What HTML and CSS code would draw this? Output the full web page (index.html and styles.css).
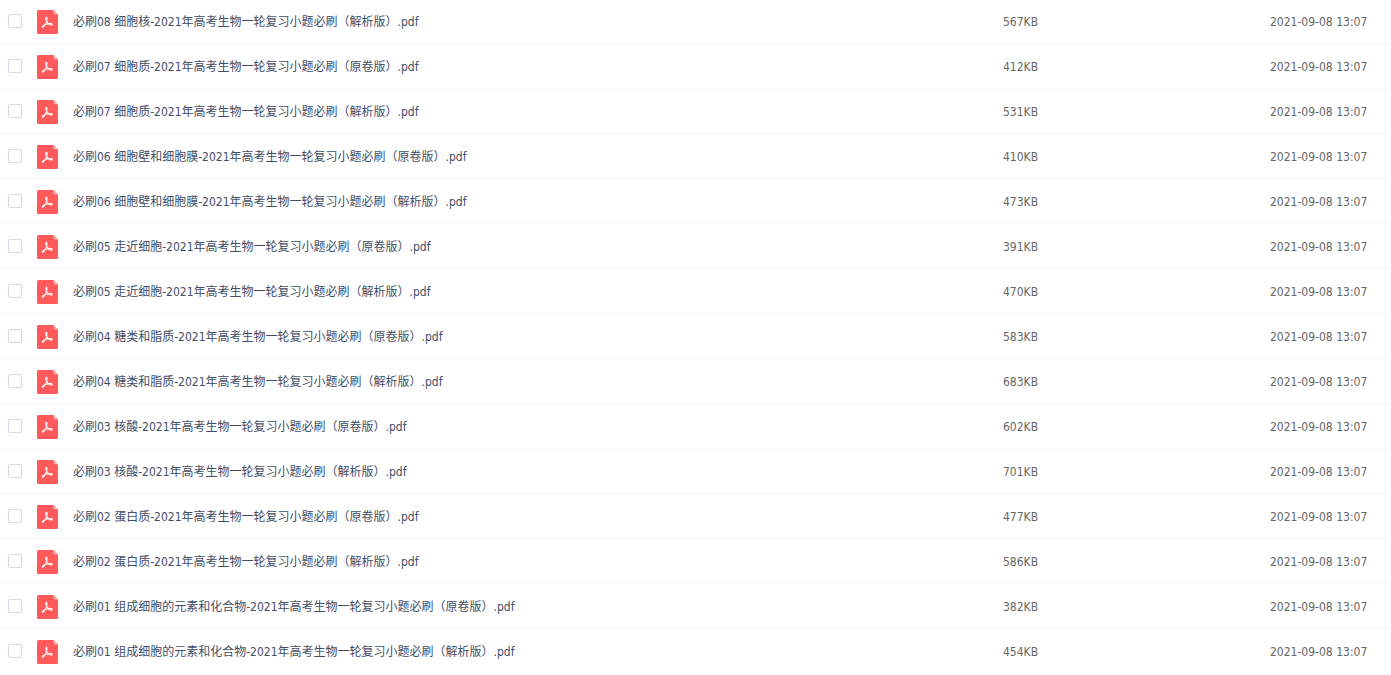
FILE: index.html
```html
<!DOCTYPE html>
<html lang="zh-CN">

<head>
  <meta charset="UTF-8">
  <title>文件列表</title>
  <link rel="stylesheet" href="styles.css">
</head>

<body>
  <svg class="sprite" width="0" height="0">
    <symbol id="pdf" viewBox="0 0 21 24">
      <path fill="#ff5959" d="M1.500 0H16.500L21 4.500V22.500a1.500 1.500 0 0 1-1.500 1.500H1.500a1.500 1.500 0 0 1-1.500-1.500V1.500a1.500 1.500 0 0 1 1.500-1.500z"/>
      <path fill="#ffacac" d="M16.500 0L21 4.500h-3a1.500 1.500 0 0 1-1.500-1.500z"/>
      <path fill="none" stroke="#fff" stroke-width="1.100" stroke-linecap="round" stroke-linejoin="round" d="M9.400 7.200c-.9.100-.7 1.600-.2 3 .6 1.500 1.600 3 2.900 4 1.200.9 2.900 1.200 3.100.4.200-1-1.800-1.200-3.700-.9-2.200.3-4.600 1.300-5.600 2.200-.8.800-.6 1.500.2 1.100.9-.5 2.300-2.700 3.100-4.900.7-1.900 1.200-4.900.2-4.900z"/>
    </symbol>
  </svg>
  <table class="list">
    <colgroup>
      <col class="col-check">
      <col class="col-icon">
      <col>
      <col class="col-size">
      <col class="col-time">
    </colgroup>
    <tbody>
      <tr>
        <td class="check"><input type="checkbox" id="f1"></td>
        <td class="icon"><svg><use href="#pdf"/></svg></td>
        <td class="name"><label for="f1">必刷08 细胞核-2021年高考生物一轮复习小题必刷（解析版）.pdf</label></td>
        <td>567KB</td>
        <td>2021-09-08 13:07</td>
      </tr>
      <tr>
        <td class="check"><input type="checkbox" id="f2"></td>
        <td class="icon"><svg><use href="#pdf"/></svg></td>
        <td class="name"><label for="f2">必刷07 细胞质-2021年高考生物一轮复习小题必刷（原卷版）.pdf</label></td>
        <td>412KB</td>
        <td>2021-09-08 13:07</td>
      </tr>
      <tr>
        <td class="check"><input type="checkbox" id="f3"></td>
        <td class="icon"><svg><use href="#pdf"/></svg></td>
        <td class="name"><label for="f3">必刷07 细胞质-2021年高考生物一轮复习小题必刷（解析版）.pdf</label></td>
        <td>531KB</td>
        <td>2021-09-08 13:07</td>
      </tr>
      <tr>
        <td class="check"><input type="checkbox" id="f4"></td>
        <td class="icon"><svg><use href="#pdf"/></svg></td>
        <td class="name"><label for="f4">必刷06 细胞壁和细胞膜-2021年高考生物一轮复习小题必刷（原卷版）.pdf</label></td>
        <td>410KB</td>
        <td>2021-09-08 13:07</td>
      </tr>
      <tr>
        <td class="check"><input type="checkbox" id="f5"></td>
        <td class="icon"><svg><use href="#pdf"/></svg></td>
        <td class="name"><label for="f5">必刷06 细胞壁和细胞膜-2021年高考生物一轮复习小题必刷（解析版）.pdf</label></td>
        <td>473KB</td>
        <td>2021-09-08 13:07</td>
      </tr>
      <tr>
        <td class="check"><input type="checkbox" id="f6"></td>
        <td class="icon"><svg><use href="#pdf"/></svg></td>
        <td class="name"><label for="f6">必刷05 走近细胞-2021年高考生物一轮复习小题必刷（原卷版）.pdf</label></td>
        <td>391KB</td>
        <td>2021-09-08 13:07</td>
      </tr>
      <tr>
        <td class="check"><input type="checkbox" id="f7"></td>
        <td class="icon"><svg><use href="#pdf"/></svg></td>
        <td class="name"><label for="f7">必刷05 走近细胞-2021年高考生物一轮复习小题必刷（解析版）.pdf</label></td>
        <td>470KB</td>
        <td>2021-09-08 13:07</td>
      </tr>
      <tr>
        <td class="check"><input type="checkbox" id="f8"></td>
        <td class="icon"><svg><use href="#pdf"/></svg></td>
        <td class="name"><label for="f8">必刷04 糖类和脂质-2021年高考生物一轮复习小题必刷（原卷版）.pdf</label></td>
        <td>583KB</td>
        <td>2021-09-08 13:07</td>
      </tr>
      <tr>
        <td class="check"><input type="checkbox" id="f9"></td>
        <td class="icon"><svg><use href="#pdf"/></svg></td>
        <td class="name"><label for="f9">必刷04 糖类和脂质-2021年高考生物一轮复习小题必刷（解析版）.pdf</label></td>
        <td>683KB</td>
        <td>2021-09-08 13:07</td>
      </tr>
      <tr>
        <td class="check"><input type="checkbox" id="f10"></td>
        <td class="icon"><svg><use href="#pdf"/></svg></td>
        <td class="name"><label for="f10">必刷03 核酸-2021年高考生物一轮复习小题必刷（原卷版）.pdf</label></td>
        <td>602KB</td>
        <td>2021-09-08 13:07</td>
      </tr>
      <tr>
        <td class="check"><input type="checkbox" id="f11"></td>
        <td class="icon"><svg><use href="#pdf"/></svg></td>
        <td class="name"><label for="f11">必刷03 核酸-2021年高考生物一轮复习小题必刷（解析版）.pdf</label></td>
        <td>701KB</td>
        <td>2021-09-08 13:07</td>
      </tr>
      <tr>
        <td class="check"><input type="checkbox" id="f12"></td>
        <td class="icon"><svg><use href="#pdf"/></svg></td>
        <td class="name"><label for="f12">必刷02 蛋白质-2021年高考生物一轮复习小题必刷（原卷版）.pdf</label></td>
        <td>477KB</td>
        <td>2021-09-08 13:07</td>
      </tr>
      <tr>
        <td class="check"><input type="checkbox" id="f13"></td>
        <td class="icon"><svg><use href="#pdf"/></svg></td>
        <td class="name"><label for="f13">必刷02 蛋白质-2021年高考生物一轮复习小题必刷（解析版）.pdf</label></td>
        <td>586KB</td>
        <td>2021-09-08 13:07</td>
      </tr>
      <tr>
        <td class="check"><input type="checkbox" id="f14"></td>
        <td class="icon"><svg><use href="#pdf"/></svg></td>
        <td class="name"><label for="f14">必刷01 组成细胞的元素和化合物-2021年高考生物一轮复习小题必刷（原卷版）.pdf</label></td>
        <td>382KB</td>
        <td>2021-09-08 13:07</td>
      </tr>
      <tr>
        <td class="check"><input type="checkbox" id="f15"></td>
        <td class="icon"><svg><use href="#pdf"/></svg></td>
        <td class="name"><label for="f15">必刷01 组成细胞的元素和化合物-2021年高考生物一轮复习小题必刷（解析版）.pdf</label></td>
        <td>454KB</td>
        <td>2021-09-08 13:07</td>
      </tr>
    </tbody>
  </table>
</body>

</html>
```
FILE: styles.css
```css
body {
  margin: 0;
  background-color: #fff;
  font-family: "DejaVu Sans Condensed", "Noto Sans CJK SC", sans-serif;
  font-size: 12px;
  line-height: 18px;
  color: #666;
}

.sprite {
  display: block;
}

.list {
  width: 100%;
  margin-top: -1px;
  table-layout: fixed;
  border-collapse: separate;
  border-spacing: 0;
}

.col-check {
  width: 37px;
}

.col-icon {
  width: 36px;
}

.col-size {
  width: 267px;
}

.col-time {
  width: 121px;
}

td {
  height: 42px;
  padding: 2px 0 0;
  border-bottom: 1px solid #f2f6fd;
  vertical-align: middle;
  white-space: nowrap;
}

.check {
  padding-left: 8px;
}

.check input {
  appearance: none;
  display: block;
  box-sizing: border-box;
  width: 14px;
  height: 14px;
  margin: 0 0 2px;
  border: 1px solid #d4dae5;
  border-radius: 2px;
  background-color: #fff;
  cursor: pointer;
}

.check input:checked {
  border-color: #06a7ff;
  background-color: #06a7ff;
}

.icon svg {
  display: block;
  width: 21px;
  height: 24px;
}

.name {
  overflow: hidden;
  text-overflow: ellipsis;
  color: #424e67;
}

.name label {
  cursor: pointer;
}
```
